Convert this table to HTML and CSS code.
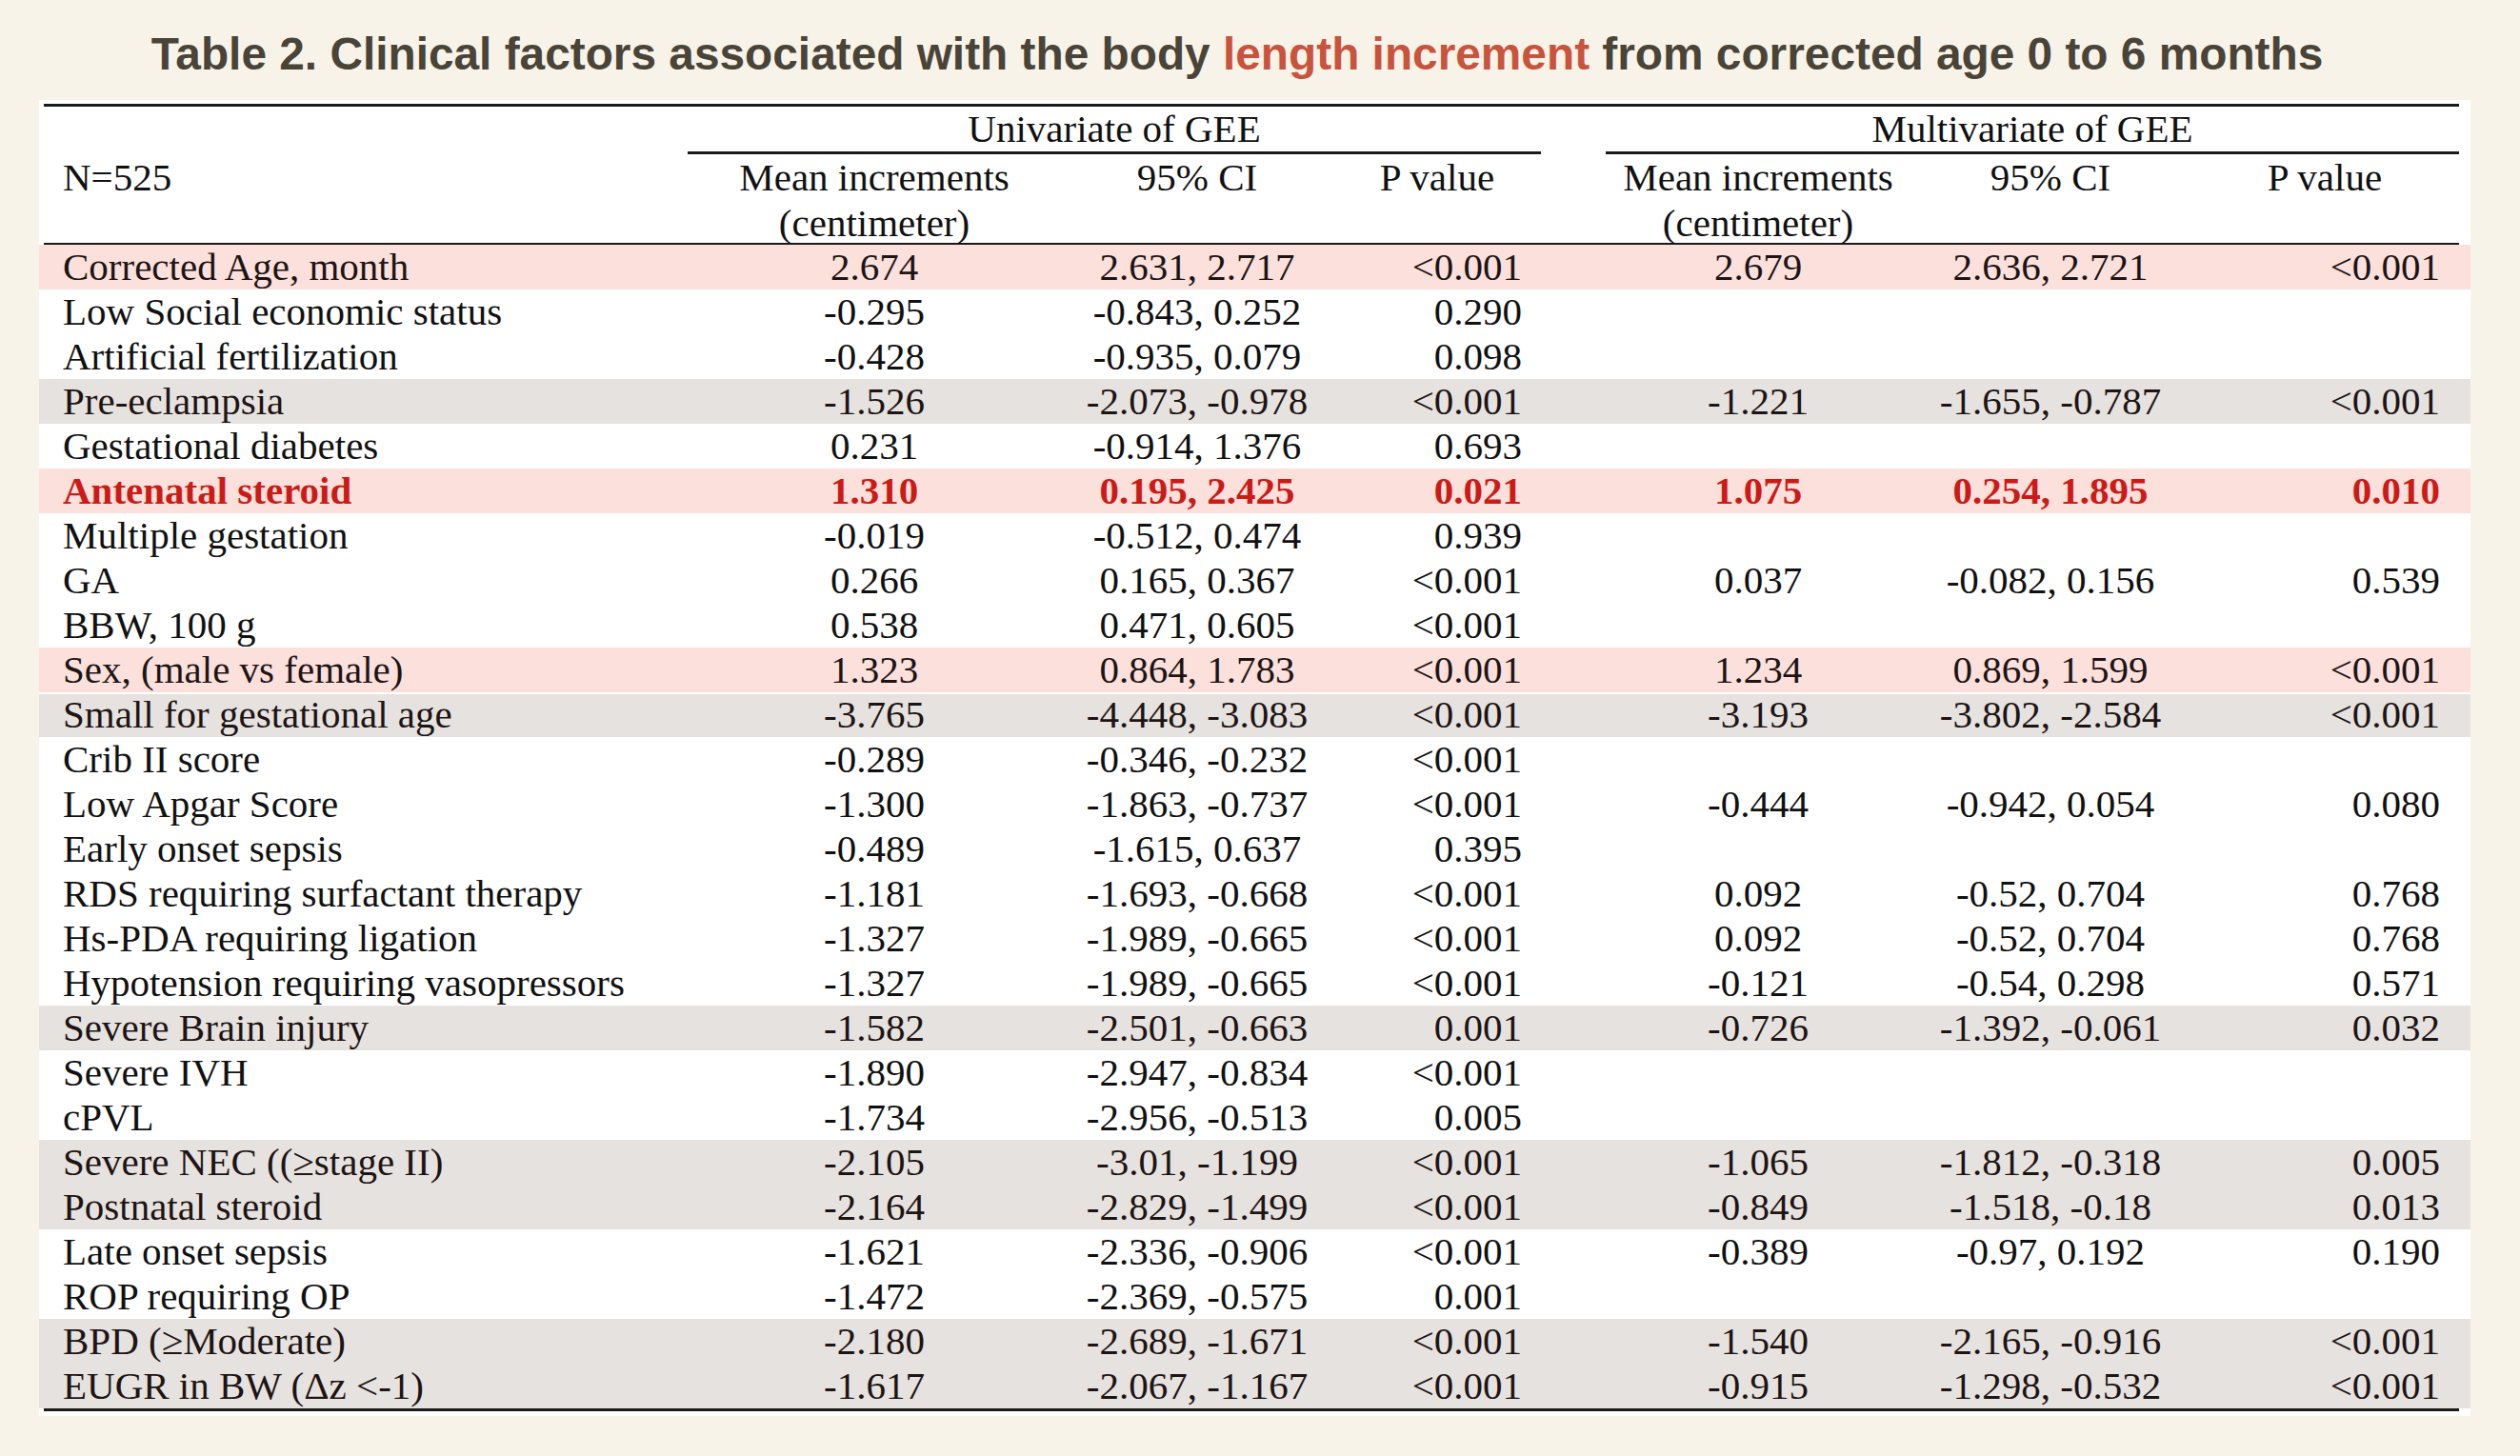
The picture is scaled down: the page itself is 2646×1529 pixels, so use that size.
FILE: index.html
```html
<!DOCTYPE html>
<html lang="en">
<head>
<meta charset="utf-8">
<title>Table 2</title>
<link rel="stylesheet" href="styles.css">
</head>
<body>
<h1 class="title">Table 2. Clinical factors associated with the body <span class="hl">length increment</span> from corrected age 0 to 6 months</h1>
<div class="panel">
  <div class="rule thick"></div>
  <div class="grid group-row">
    <div class="group uni">Univariate of GEE</div>
    <div class="group multi">Multivariate of GEE</div>
  </div>
  <div class="grid sub-row">
    <div class="label">N=525</div>
    <div class="hc">Mean increments<br>(centimeter)</div>
    <div class="hc">95% CI</div>
    <div class="hc">P value</div>
    <div></div>
    <div class="hc">Mean increments<br>(centimeter)</div>
    <div class="hc">95% CI</div>
    <div class="hc pm">P value</div>
  </div>
  <div class="rule mid"></div>
  <div class="body">
    <div class="grid row pink"><div class="label">Corrected Age, month</div><div class="c">2.674</div><div class="c">2.631, 2.717</div><div class="p">&lt;0.001</div><div></div><div class="c">2.679</div><div class="c">2.636, 2.721</div><div class="p p2">&lt;0.001</div></div>
    <div class="grid row"><div class="label">Low Social economic status</div><div class="c">-0.295</div><div class="c">-0.843, 0.252</div><div class="p">0.290</div><div></div><div class="c"></div><div class="c"></div><div class="p p2"></div></div>
    <div class="grid row"><div class="label">Artificial fertilization</div><div class="c">-0.428</div><div class="c">-0.935, 0.079</div><div class="p">0.098</div><div></div><div class="c"></div><div class="c"></div><div class="p p2"></div></div>
    <div class="grid row gray"><div class="label">Pre-eclampsia</div><div class="c">-1.526</div><div class="c">-2.073, -0.978</div><div class="p">&lt;0.001</div><div></div><div class="c">-1.221</div><div class="c">-1.655, -0.787</div><div class="p p2">&lt;0.001</div></div>
    <div class="grid row"><div class="label">Gestational diabetes</div><div class="c">0.231</div><div class="c">-0.914, 1.376</div><div class="p">0.693</div><div></div><div class="c"></div><div class="c"></div><div class="p p2"></div></div>
    <div class="grid row pink strong"><div class="label">Antenatal steroid</div><div class="c">1.310</div><div class="c">0.195, 2.425</div><div class="p">0.021</div><div></div><div class="c">1.075</div><div class="c">0.254, 1.895</div><div class="p p2">0.010</div></div>
    <div class="grid row"><div class="label">Multiple gestation</div><div class="c">-0.019</div><div class="c">-0.512, 0.474</div><div class="p">0.939</div><div></div><div class="c"></div><div class="c"></div><div class="p p2"></div></div>
    <div class="grid row"><div class="label">GA</div><div class="c">0.266</div><div class="c">0.165, 0.367</div><div class="p">&lt;0.001</div><div></div><div class="c">0.037</div><div class="c">-0.082, 0.156</div><div class="p p2">0.539</div></div>
    <div class="grid row"><div class="label">BBW, 100 g</div><div class="c">0.538</div><div class="c">0.471, 0.605</div><div class="p">&lt;0.001</div><div></div><div class="c"></div><div class="c"></div><div class="p p2"></div></div>
    <div class="grid row pink"><div class="label">Sex, (male vs female)</div><div class="c">1.323</div><div class="c">0.864, 1.783</div><div class="p">&lt;0.001</div><div></div><div class="c">1.234</div><div class="c">0.869, 1.599</div><div class="p p2">&lt;0.001</div></div>
    <div class="grid row gray sep"><div class="label">Small for gestational age</div><div class="c">-3.765</div><div class="c">-4.448, -3.083</div><div class="p">&lt;0.001</div><div></div><div class="c">-3.193</div><div class="c">-3.802, -2.584</div><div class="p p2">&lt;0.001</div></div>
    <div class="grid row"><div class="label">Crib II score</div><div class="c">-0.289</div><div class="c">-0.346, -0.232</div><div class="p">&lt;0.001</div><div></div><div class="c"></div><div class="c"></div><div class="p p2"></div></div>
    <div class="grid row"><div class="label">Low Apgar Score</div><div class="c">-1.300</div><div class="c">-1.863, -0.737</div><div class="p">&lt;0.001</div><div></div><div class="c">-0.444</div><div class="c">-0.942, 0.054</div><div class="p p2">0.080</div></div>
    <div class="grid row"><div class="label">Early onset sepsis</div><div class="c">-0.489</div><div class="c">-1.615, 0.637</div><div class="p">0.395</div><div></div><div class="c"></div><div class="c"></div><div class="p p2"></div></div>
    <div class="grid row"><div class="label">RDS requiring surfactant therapy</div><div class="c">-1.181</div><div class="c">-1.693, -0.668</div><div class="p">&lt;0.001</div><div></div><div class="c">0.092</div><div class="c">-0.52, 0.704</div><div class="p p2">0.768</div></div>
    <div class="grid row"><div class="label">Hs-PDA requiring ligation</div><div class="c">-1.327</div><div class="c">-1.989, -0.665</div><div class="p">&lt;0.001</div><div></div><div class="c">0.092</div><div class="c">-0.52, 0.704</div><div class="p p2">0.768</div></div>
    <div class="grid row"><div class="label">Hypotension requiring vasopressors</div><div class="c">-1.327</div><div class="c">-1.989, -0.665</div><div class="p">&lt;0.001</div><div></div><div class="c">-0.121</div><div class="c">-0.54, 0.298</div><div class="p p2">0.571</div></div>
    <div class="grid row gray"><div class="label">Severe Brain injury</div><div class="c">-1.582</div><div class="c">-2.501, -0.663</div><div class="p">0.001</div><div></div><div class="c">-0.726</div><div class="c">-1.392, -0.061</div><div class="p p2">0.032</div></div>
    <div class="grid row"><div class="label">Severe IVH</div><div class="c">-1.890</div><div class="c">-2.947, -0.834</div><div class="p">&lt;0.001</div><div></div><div class="c"></div><div class="c"></div><div class="p p2"></div></div>
    <div class="grid row"><div class="label">cPVL</div><div class="c">-1.734</div><div class="c">-2.956, -0.513</div><div class="p">0.005</div><div></div><div class="c"></div><div class="c"></div><div class="p p2"></div></div>
    <div class="grid row gray"><div class="label">Severe NEC ((≥stage II)</div><div class="c">-2.105</div><div class="c">-3.01, -1.199</div><div class="p">&lt;0.001</div><div></div><div class="c">-1.065</div><div class="c">-1.812, -0.318</div><div class="p p2">0.005</div></div>
    <div class="grid row gray"><div class="label">Postnatal steroid</div><div class="c">-2.164</div><div class="c">-2.829, -1.499</div><div class="p">&lt;0.001</div><div></div><div class="c">-0.849</div><div class="c">-1.518, -0.18</div><div class="p p2">0.013</div></div>
    <div class="grid row"><div class="label">Late onset sepsis</div><div class="c">-1.621</div><div class="c">-2.336, -0.906</div><div class="p">&lt;0.001</div><div></div><div class="c">-0.389</div><div class="c">-0.97, 0.192</div><div class="p p2">0.190</div></div>
    <div class="grid row"><div class="label">ROP requiring OP</div><div class="c">-1.472</div><div class="c">-2.369, -0.575</div><div class="p">0.001</div><div></div><div class="c"></div><div class="c"></div><div class="p p2"></div></div>
    <div class="grid row gray"><div class="label">BPD (≥Moderate)</div><div class="c">-2.180</div><div class="c">-2.689, -1.671</div><div class="p">&lt;0.001</div><div></div><div class="c">-1.540</div><div class="c">-2.165, -0.916</div><div class="p p2">&lt;0.001</div></div>
    <div class="grid row gray"><div class="label">EUGR in BW (Δz &lt;-1)</div><div class="c">-1.617</div><div class="c">-2.067, -1.167</div><div class="p">&lt;0.001</div><div></div><div class="c">-0.915</div><div class="c">-1.298, -0.532</div><div class="p p2">&lt;0.001</div></div>
  </div>
  <div class="rule bottom"></div>
</div>
</body>
</html>
```
FILE: styles.css
```css
html {
  margin: 0;
  padding: 0;
  height: 1529px;
  overflow: hidden;
  background: #f7f3e9;
}
body {
  margin: 0;
  background: #f7f3e9;
  width: 2646px;
  height: 1529px;
  box-sizing: border-box;
  padding: 33px 0 0 0;
  overflow: hidden;
}
.title {
  margin: 0;
  padding-right: 48px;
  height: 47px;
  font-family: "Liberation Sans", Arial, sans-serif;
  font-weight: bold;
  font-size: 47.8px;
  line-height: 47px;
  text-align: center;
  color: #4a4438;
  white-space: nowrap;
}
.title .hl {
  color: #c9533c;
}
.panel {
  margin: 25px 0 0 41px;
  width: 2553px;
  background: #ffffff;
  padding: 4px 0 5px 0;
  font-family: "Liberation Serif", "Times New Roman", serif;
  font-size: 41px;
  color: #111111;
}
.rule {
  margin: 0 12px 0 5px;
  background: #1a1a1a;
}
.rule.thick { height: 3px; }
.rule.mid { height: 2px; }
.rule.bottom { height: 3px; }
.grid {
  display: grid;
  grid-template-columns: 681px 392px 286px 218px 68px 320px 294px 294px;
}
.group-row {
  height: 50px;
}
.group {
  height: 47px;
  line-height: 47px;
  text-align: center;
  border-bottom: 3px solid #1a1a1a;
  white-space: nowrap;
}
.group.uni { grid-column: 2 / 5; }
.group.multi { grid-column: 6 / 9; margin-right: 12px; }
.sub-row {
  height: 93px;
  line-height: 48px;
}
.sub-row .hc {
  text-align: center;
  white-space: nowrap;
}
.sub-row .hc.pm {
  padding-right: 12px;
}
.label {
  padding-left: 25px;
  white-space: nowrap;
}
.row {
  height: 47px;
  line-height: 47px;
}
.row > div {
  white-space: nowrap;
}
.row .c { text-align: center; }
.row .p { text-align: right; padding-right: 20px; }
.row .p.p2 { padding-right: 32px; }
.row.pink { background: #fbe0dc; }
.row.gray { background: #e6e2df; }
.row.sep { box-shadow: inset 0 2px 0 #ffffff; }
.row.pink > div, .row.gray > div { color: #1e1414; }
.row.strong > div {
  color: #cc1b17;
  font-weight: bold;
}
```
